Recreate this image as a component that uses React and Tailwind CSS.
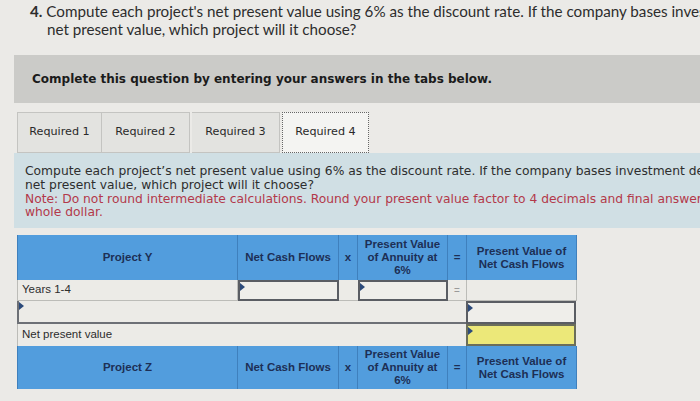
import React from "react";

const Flag = () => (
  <span className="absolute left-0 w-0 h-0 border-t-[4px] border-t-transparent border-b-[4px] border-b-transparent border-l-[5px] border-l-[#2c4a7a]" style={{ top: 1 }} />
);

const hdr = "flex items-center justify-center text-center font-bold text-[#1d2f55] text-[11.5px] leading-[13px] border-r border-[#3f80bd]";

function Header({ name, h }) {
  return (
    <div className={`flex ${h} bg-[#529ddd] border-l border-[#3f80bd]`} style={{ fontFamily: "'Liberation Sans', Arial, sans-serif" }}>
      <div className={`${hdr} w-[220px]`}>{name}</div>
      <div className={`${hdr} w-[101px]`}>Net Cash Flows</div>
      <div className={`${hdr} w-[19px]`}>x</div>
      <div className={`${hdr} w-[90px]`}>Present Value<br />of Annuity at<br />6%</div>
      <div className={`${hdr} w-[19px]`}>=</div>
      <div className={`${hdr} w-[110px]`}>Present Value of<br />Net Cash Flows</div>
    </div>
  );
}

export default function App() {
  return (
    <div className="w-[700px] h-[401px] overflow-hidden bg-[#ebeae7] relative">
      <div className="w-[900px]">
        <div className="pl-[30px] pt-[2px] h-[37px] text-[15.2px] leading-[18px] text-[#2d2d2d] whitespace-nowrap" style={{ fontFamily: "Lato, 'Open Sans', sans-serif" }}>
          <div><span className="font-bold">4.</span> Compute each project's net present value using 6% as the discount rate. If the company bases investment decisions on</div>
          <div className="pl-[17px]">net present value, which project will it choose?</div>
        </div>

        <div className="ml-[14px] mt-[18px] h-[48px] bg-[#cbcbc8] flex items-center pl-[18px] text-[12px] font-bold text-[#1b1b1b] whitespace-nowrap" style={{ fontFamily: "Verdana, 'DejaVu Sans', sans-serif" }}>
          Complete this question by entering your answers in the tabs below.
        </div>

        <div className="ml-[17px] mt-[9px] flex h-[41px] text-[11.2px] text-[#2a2a2a]" style={{ fontFamily: "Verdana, 'DejaVu Sans', sans-serif" }}>
          <div className="w-[85px] flex items-center justify-center bg-[#e3e3e0] border border-[#c4c4c1]">Required 1</div>
          <div className="w-[88px] flex items-center justify-center bg-[#e3e3e0] border border-[#c4c4c1] border-l-0">Required 2</div>
          <div className="w-[88px] flex items-center justify-center bg-[#e3e3e0] border border-[#c4c4c1] border-l-0 ml-[2px]">Required 3</div>
          <div className="w-[87px] flex items-center justify-center bg-[#f4f4f2] border border-dotted border-[#666] ml-[2px]">Required 4</div>
        </div>

        <div className="ml-[14px] h-[75px] bg-[#d0dfe4] pl-[11px] pt-[12px] text-[12.3px] leading-[13.8px] text-[#2e2e2e] whitespace-nowrap" style={{ fontFamily: "Verdana, 'DejaVu Sans', sans-serif" }}>
          <div>Compute each project’s net present value using 6% as the discount rate. If the company bases investment decisions on</div>
          <div>net present value, which project will it choose?</div>
          <div className="text-[#b3394a]">Note: Do not round intermediate calculations. Round your present value factor to 4 decimals and final answers to the nearest</div>
          <div className="text-[#b3394a]">whole dollar.</div>
        </div>

        <div className="ml-[17px] mt-[7px] w-[560px] text-[11.5px] text-[#2d2d2d]" style={{ fontFamily: "'Liberation Sans', Arial, sans-serif" }}>
          <Header name="Project Y" h="h-[45px]" />
          <div className="flex h-[21px] bg-[#ecebe7] border-l border-[#bcbcb8]">
            <div className="w-[220px] flex items-center pl-[4px] border-r border-b border-[#bcbcb8]">Years 1-4</div>
            <div className="w-[101px] relative border-2 border-[#5a5d63] bg-[#efeeea]"><Flag /></div>
            <div className="w-[19px] border-b border-[#bcbcb8]"></div>
            <div className="w-[90px] relative border-2 border-[#5a5d63] bg-[#efeeea]"><Flag /></div>
            <div className="w-[19px] flex items-center justify-center text-[#9a9a9a] text-[10px] border-r border-b border-[#bcbcb8]">=</div>
            <div className="w-[110px] border-r border-b border-[#bcbcb8]"></div>
          </div>
          <div className="flex h-[23px] bg-[#ecebe7]">
            <div className="w-[449px] relative border-l-2 border-b-2 border-[#6d7076]"><Flag /></div>
            <div className="w-[110px] relative border-2 border-[#5a5d63] bg-[#efeeea]"><Flag /></div>
          </div>
          <div className="flex h-[22px] bg-[#ecebe7] border-l border-[#bcbcb8]">
            <div className="w-[448px] flex items-center pl-[4px]">Net present value</div>
            <div className="w-[110px] relative border-2 border-[#6b6e5a] bg-[#ece879]"><Flag /></div>
          </div>
          <Header name="Project Z" h="h-[43px]" />
        </div>
      </div>
    </div>
  );
}
